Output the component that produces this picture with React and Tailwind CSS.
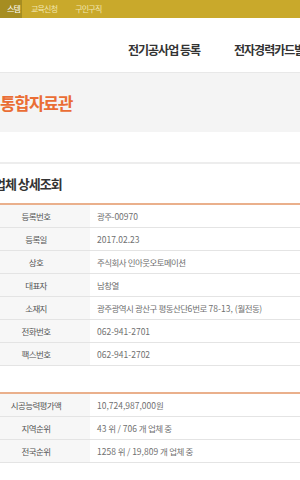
import React from "react";

const detailRows = [
  { label: "등록번호", value: "광주-00970" },
  { label: "등록일", value: "2017.02.23" },
  { label: "상호", value: "주식회사 인아웃오토메이션" },
  { label: "대표자", value: "남창열" },
  { label: "소재지", value: "광주광역시 광산구 평동산단6번로 78-13, (월전동)" },
  { label: "전화번호", value: "062-941-2701" },
  { label: "팩스번호", value: "062-941-2702" },
];

const rankRows = [
  { label: "시공능력평가액", value: "10,724,987,000원" },
  { label: "지역순위", value: "43 위 / 706 개 업체 중" },
  { label: "전국순위", value: "1258 위 / 19,809 개 업체 중" },
];

// hangul runs get a bit tighter spacing than digits
const KoText = ({ text }) =>
  text.split(/([가-힣]+)/).map((part, i) =>
    /[가-힣]/.test(part) ? (
      <span key={i} className="tracking-[-0.6px]">
        {part}
      </span>
    ) : (
      <span key={i} className="whitespace-pre">
        {part}
      </span>
    )
  );

const InfoTable = ({ rows }) => (
  <div className="border-t-2 border-[#eab08c]">
    {rows.map((row) => (
      <div
        key={row.label}
        className="flex h-[23px] border-b border-[#e4e4e4] text-[8.5px]"
      >
        <div className="w-[108px] shrink-0 bg-[#f7f7f7] flex items-center justify-center text-[#555]">
          <KoText text={row.label} />
        </div>
        <div className="flex items-center pl-[7px] text-[#707070] whitespace-nowrap">
          <KoText text={row.value} />
        </div>
      </div>
    ))}
  </div>
);

const App = () => {
  return (
    <div className="w-[300px] h-[480px] overflow-hidden bg-white font-['Noto_Sans_CJK_KR',sans-serif]">
      {/* Top bar */}
      <div className="h-[18px] bg-[#c9a92b] flex items-center text-[8px] tracking-[-0.8px] text-[#f1e5ae]">
        <div className="w-[22px] h-full bg-[#a68d21] flex items-center justify-end pr-[2px] overflow-hidden whitespace-nowrap text-white">
          스템
        </div>
        <div className="ml-[9px]">교육신청</div>
        <div className="ml-[18px]">구인구직</div>
      </div>

      {/* Header nav */}
      <div className="h-[54px] flex items-end pb-[13px] pl-[128px] gap-[34px] whitespace-nowrap text-[12px] font-bold tracking-[-1px] text-[#333]">
        <span>전기공사업 등록</span>
        <span>전자경력카드발급</span>
      </div>

      {/* Banner */}
      <div className="h-[60px] bg-[#f4f4f4] border-t border-[#e8e8e8] flex items-center">
        <h1 className="text-[17px] font-bold tracking-[-1.2px] text-[#ea6d35]">
          통합자료관
        </h1>
      </div>

      <div className="h-[30px]" />

      {/* Content */}
      <div className="border-t-2 border-[#ededed]">
        <div className="ml-[-18px] w-[340px]">
          <h2 className="h-[39px] flex items-center pl-[12px] text-[13px] font-bold tracking-[-1px] text-[#333]">
            업체 상세조회
          </h2>
          <InfoTable rows={detailRows} />
          <div className="h-[26px]" />
          <InfoTable rows={rankRows} />
        </div>
      </div>
    </div>
  );
};

export default App;
